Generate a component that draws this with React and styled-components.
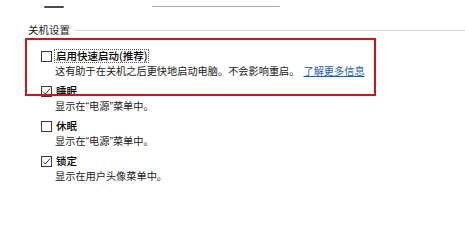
import React from "react";
import styled, { createGlobalStyle } from "styled-components";

const Global = createGlobalStyle`
  html, body { margin: 0; padding: 0; background: #fff; }
  body {
    width: 465px; height: 240px; overflow: hidden;
    font-family: "Noto Sans CJK SC", "Noto Sans", sans-serif;
    color: #1a1a1a;
  }
`;

const Page = styled.div`
  position: relative;
  width: 465px;
  height: 240px;
  background: #fff;
`;

const TopStrip = styled.div`
  height: 22px;
  display: flex;
  align-items: flex-start;
  padding-top: 6px;
  box-sizing: border-box;
`;

const Remnant = styled.div`
  height: ${(p) => p.$h || 1}px;
  width: ${(p) => p.$w}px;
  margin-left: ${(p) => p.$ml}px;
  background: ${(p) => p.$c};
  border-radius: 1px;
`;

const Section = styled.div`
  padding-left: 28px;
`;

const HeaderRow = styled.div`
  display: flex;
  align-items: center;
  gap: 5px;
  height: 16px;
`;

const Title = styled.span`
  font-size: 10.5px;
  line-height: 16px;
  color: #1a1a1a;
`;

const Rule = styled.div`
  flex: 1;
  height: 1px;
  background: #d6d6d6;
`;

const List = styled.div`
  display: flex;
  flex-direction: column;
  gap: 6px;
  padding-left: 13px;
  margin-top: 11px;
`;

const Group = styled.div`
  display: flex;
  flex-direction: column;
`;

const LabelRow = styled.div`
  display: flex;
  align-items: center;
  height: 14px;
  gap: 2px;
`;

const Box = styled.span`
  width: 11px;
  height: 11px;
  box-sizing: border-box;
  border: 1px solid #3a3a3a;
  background: #fff;
  display: inline-flex;
  align-items: center;
  justify-content: center;
  flex: none;
`;

const Label = styled.span`
  font-size: 10.5px;
  line-height: 12px;
  font-weight: 500;
  color: #000;
  padding: 0 1px;
  border: 1px ${(p) => (p.$focus ? "dotted #555" : "solid transparent")};
`;

const Desc = styled.div`
  font-size: 10.2px;
  line-height: 15px;
  height: 15px;
  padding-left: 14px;
  color: #222;
  white-space: nowrap;
`;

const Quote = styled.span`
  font-family: "Liberation Sans", sans-serif;
  font-size: 10.5px;
`;

const Link = styled.a`
  color: #1a5fb4;
  text-decoration: underline;
  margin-left: 4px;
`;

const Highlight = styled.div`
  position: absolute;
  left: 25px;
  top: 38px;
  width: 351px;
  height: 58px;
  box-sizing: border-box;
  border: 2.5px solid #cf141d;
  pointer-events: none;
`;

const Check = () => (
  <svg width="9" height="9" viewBox="0 0 9 9">
    <path d="M1 4.6 L3.4 7 L8 1.6" fill="none" stroke="#333" strokeWidth="1" />
  </svg>
);

const PowerDesc = () => (
  <>
    显示在<Quote>“</Quote>电源<Quote>”</Quote>菜单中。
  </>
);

const items = [
  { label: "睡眠", checked: true, desc: <PowerDesc /> },
  { label: "休眠", checked: false, desc: <PowerDesc /> },
  { label: "锁定", checked: true, desc: "显示在用户头像菜单中。" },
];

export default function App() {
  return (
    <Page>
      <Global />
      <TopStrip>
        <Remnant $ml={44} $w={20} $h={2} $c="#4a4a4a" />
        <Remnant $ml={88} $w={128} $h={1} $c="#a8a8a8" />
      </TopStrip>
      <Section>
        <HeaderRow>
          <Title>关机设置</Title>
          <Rule />
        </HeaderRow>
        <List>
          <Group>
            <LabelRow>
              <Box />
              <Label $focus>启用快速启动(推荐)</Label>
            </LabelRow>
            <Desc>
              这有助于在关机之后更快地启动电脑。不会影响重启。
              <Link>了解更多信息</Link>
            </Desc>
          </Group>
          {items.map((it) => (
            <Group key={it.label}>
              <LabelRow>
                <Box>{it.checked && <Check />}</Box>
                <Label>{it.label}</Label>
              </LabelRow>
              <Desc>{it.desc}</Desc>
            </Group>
          ))}
        </List>
      </Section>
      <Highlight />
    </Page>
  );
}
